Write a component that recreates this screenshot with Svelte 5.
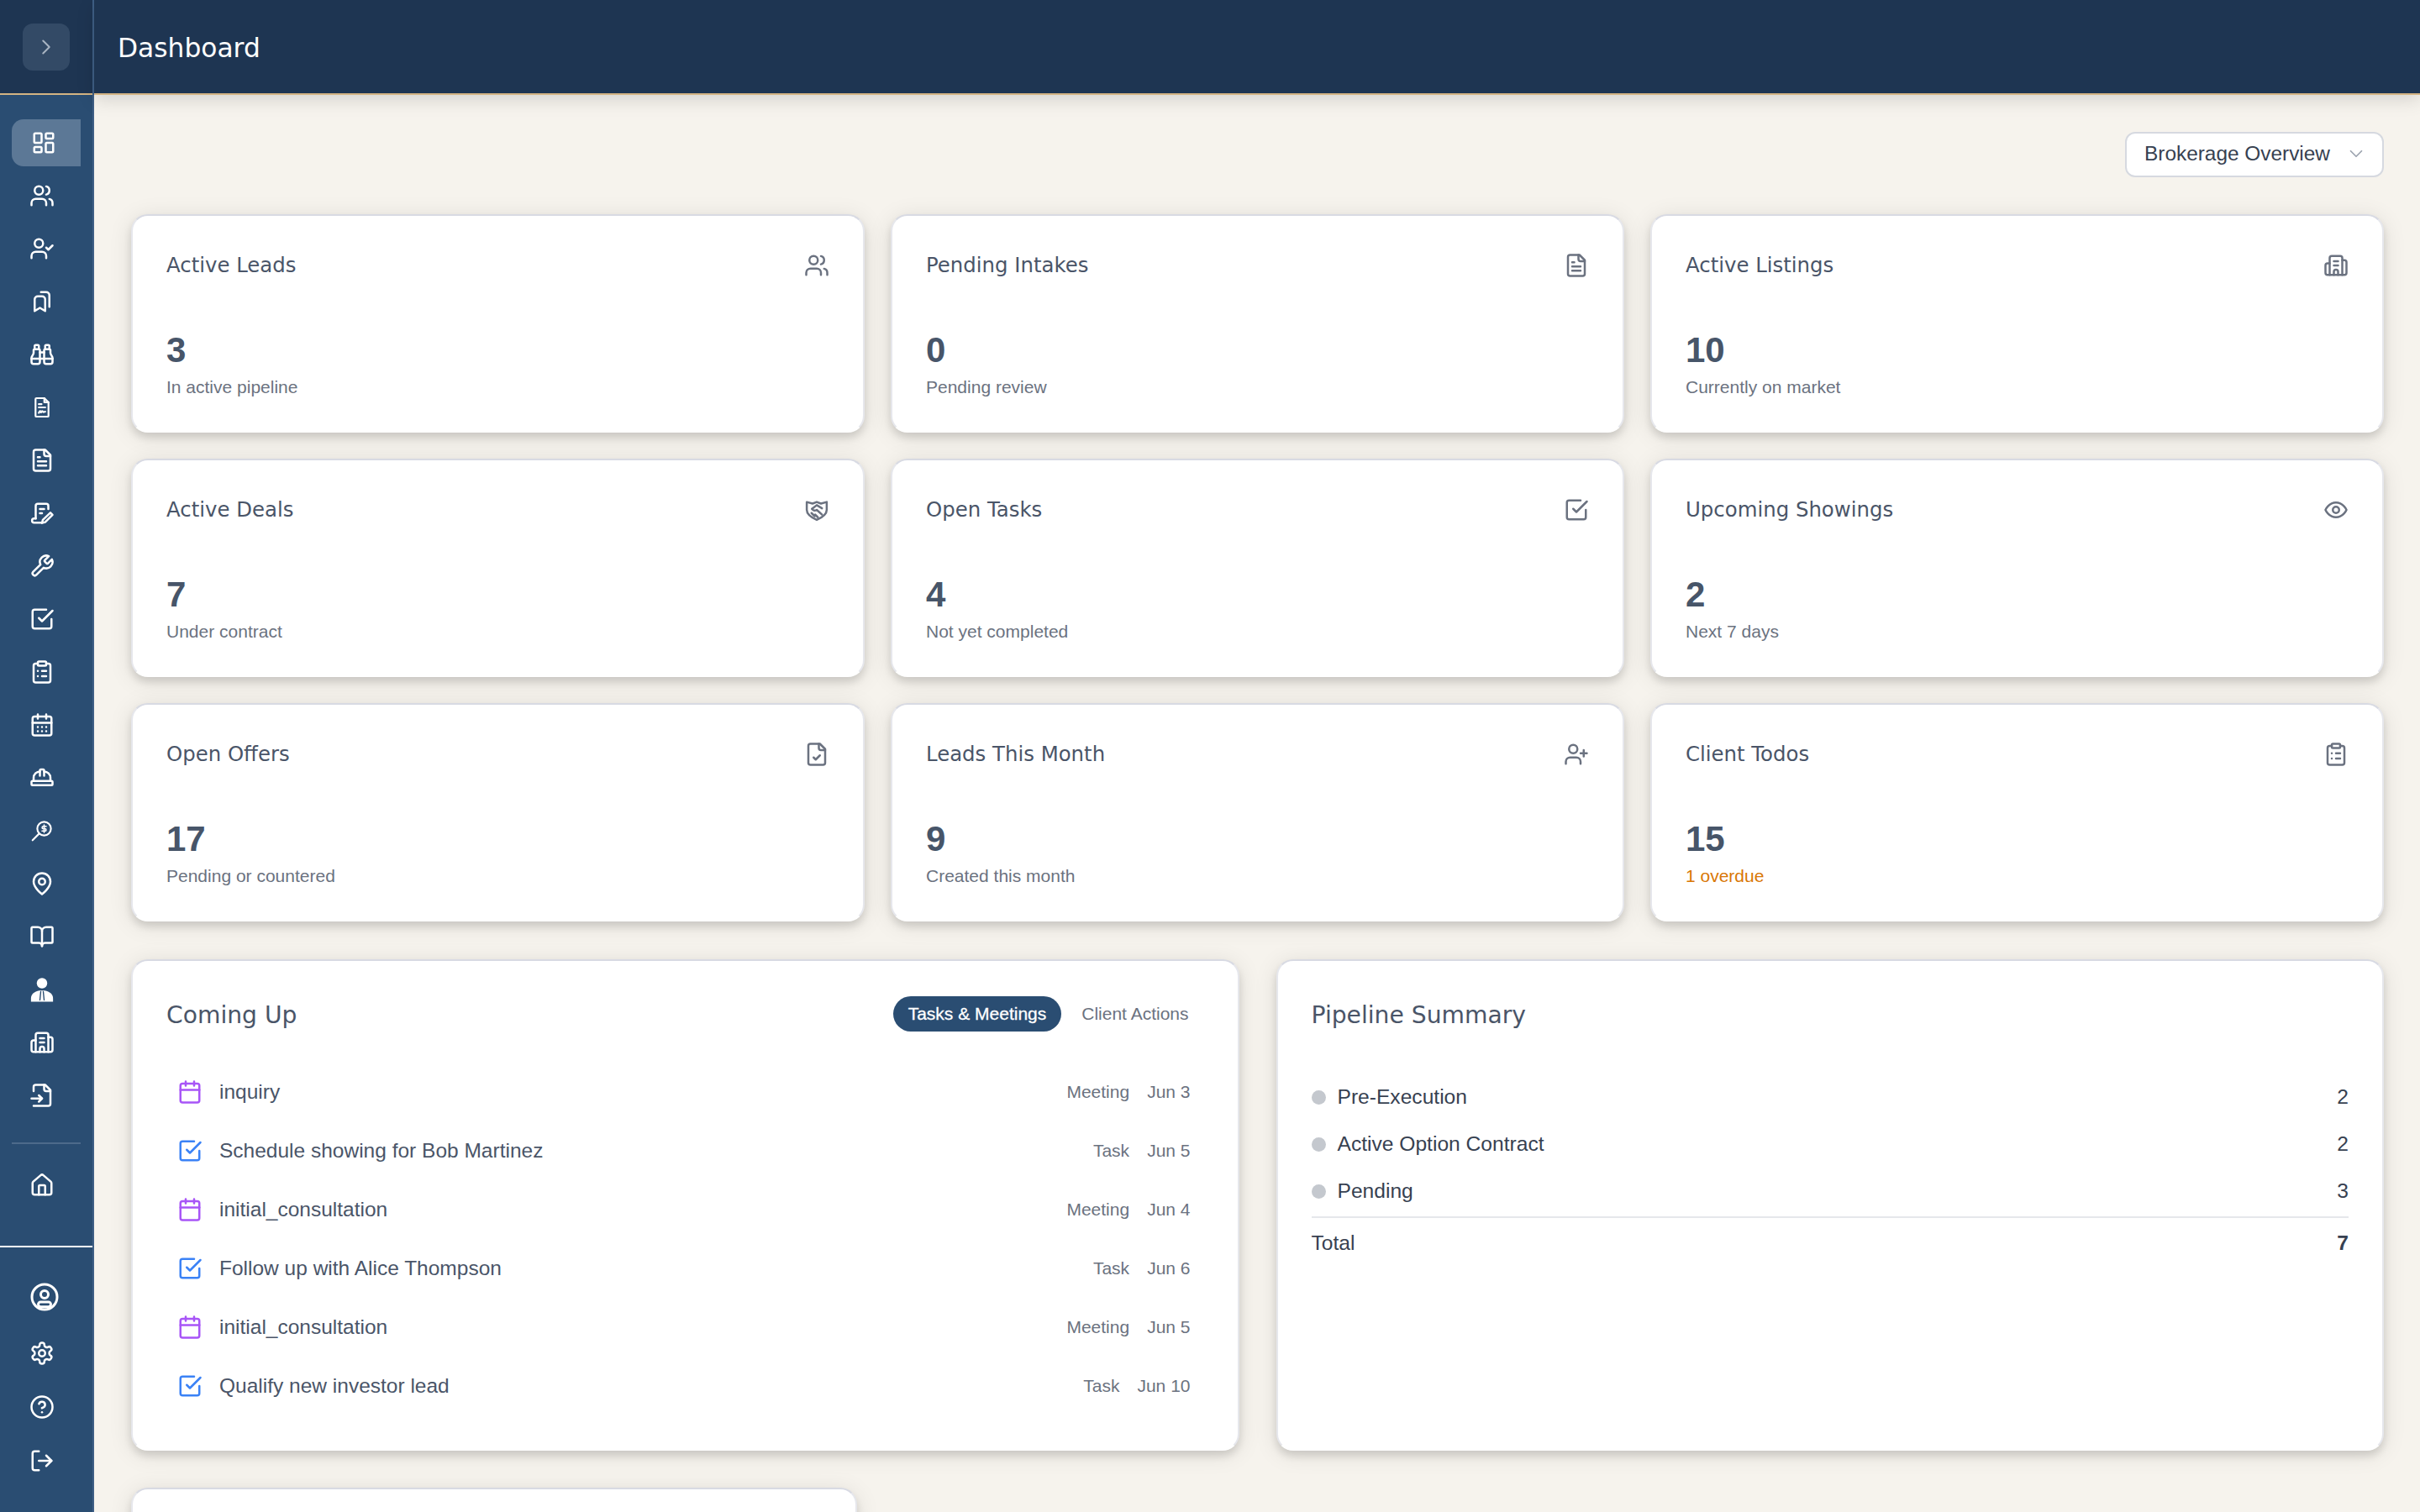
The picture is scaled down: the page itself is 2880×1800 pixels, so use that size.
<script lang="ts">
	const icons: Record<string, string> = {
		dashboard: '<rect x="3" y="3" width="7" height="9" rx="1"/><rect x="14" y="3" width="7" height="5" rx="1"/><rect x="14" y="12" width="7" height="9" rx="1"/><rect x="3" y="16" width="7" height="5" rx="1"/>',
		users: '<path d="M16 21v-2a4 4 0 0 0-4-4H6a4 4 0 0 0-4 4v2"/><circle cx="9" cy="7" r="4"/><path d="M22 21v-2a4 4 0 0 0-3-3.87"/><path d="M16 3.13a4 4 0 0 1 0 7.75"/>',
		userCheck: '<path d="M16 21v-2a4 4 0 0 0-4-4H6a4 4 0 0 0-4 4v2"/><circle cx="9" cy="7" r="4"/><path d="m16 11 2 2 4-4"/>',
		userPlus: '<path d="M16 21v-2a4 4 0 0 0-4-4H6a4 4 0 0 0-4 4v2"/><circle cx="9" cy="7" r="4"/><path d="M19 8v6M22 11h-6"/>',
		bookmarks: '<path d="M15 10v11l-5-3-5 3V10a3 3 0 0 1 3-3h4a3 3 0 0 1 3 3z"/><path d="M11 3h5a3 3 0 0 1 3 3v11"/>',
		binoculars: '<path d="M10 10h4"/><path d="M19 7V4a1 1 0 0 0-1-1h-2a1 1 0 0 0-1 1v3"/><path d="M20 21a2 2 0 0 0 2-2v-3.851c0-1.39-2-2.962-2-4.829V8a1 1 0 0 0-1-1h-4a1 1 0 0 0-1 1v11a2 2 0 0 0 2 2z"/><path d="M22 16H2"/><path d="M4 21a2 2 0 0 1-2-2v-3.851c0-1.39 2-2.962 2-4.829V8a1 1 0 0 1 1-1h4a1 1 0 0 1 1 1v11a2 2 0 0 1-2 2z"/><path d="M9 7V4a1 1 0 0 0-1-1H6a1 1 0 0 0-1 1v3"/>',
		fileSign: '<g transform="translate(12 12) scale(.88) translate(-12 -12)"><path d="M14.5 2H6a1 1 0 0 0-1 1v18a1 1 0 0 0 1 1h12a1 1 0 0 0 1-1V6.5z"/><path d="M14.5 2v4.5H19"/><path d="M8.5 8.5h3M8.5 12h7"/><path d="M8.5 18c1-2.5 2-2.5 2.2-1s1-1.5 1.8-.8.7 1 1.2.8 1 0 1.8-.4"/></g>',
		fileText: '<path d="M15 2H6a2 2 0 0 0-2 2v16a2 2 0 0 0 2 2h12a2 2 0 0 0 2-2V7Z"/><path d="M14 2v4a2 2 0 0 0 2 2h4"/><path d="M10 9H8M16 13H8M16 17H8"/>',
		contract: '<path d="M18 8V5a2 2 0 0 0-2-2H8a2 2 0 0 0-2 2v12"/><path d="M6 17H4.5a2 2 0 0 0 0 4H12"/><path d="M10 8h4M10 12h2"/><path d="M20 11.5l2 2-7 7-3 .8.8-3z"/>',
		wrench: '<path d="M14.7 6.3a1 1 0 0 0 0 1.4l1.6 1.6a1 1 0 0 0 1.4 0l3.77-3.77a6 6 0 0 1-7.94 7.94l-6.91 6.91a2.12 2.12 0 0 1-3-3l6.91-6.91a6 6 0 0 1 7.94-7.94l-3.76 3.76z"/>',
		check: '<path d="m9 11 3 3L22 4"/><path d="M21 12v7a2 2 0 0 1-2 2H5a2 2 0 0 1-2-2V5a2 2 0 0 1 2-2h11"/>',
		clipboard: '<rect x="8" y="2" width="8" height="4" rx="1"/><path d="M16 4h2a2 2 0 0 1 2 2v14a2 2 0 0 1-2 2H6a2 2 0 0 1-2-2V6a2 2 0 0 1 2-2h2"/><path d="M12 11h4M12 16h4M8 11h.01M8 16h.01"/>',
		calendarDays: '<path d="M8 2v4M16 2v4"/><rect x="3" y="4" width="18" height="18" rx="2"/><path d="M3 10h18"/><path d="M8 14h.01M12 14h.01M16 14h.01M8 18h.01M12 18h.01M16 18h.01"/>',
		calendar: '<path d="M8 2v4M16 2v4"/><rect x="3" y="4" width="18" height="18" rx="2"/><path d="M3 10h18"/>',
		hardHat: '<path d="M10 10V5a1 1 0 0 1 1-1h2a1 1 0 0 1 1 1v5"/><path d="M14 6a6 6 0 0 1 6 6v3"/><path d="M4 15v-3a6 6 0 0 1 6-6"/><rect x="2" y="15" width="20" height="4" rx="1"/>',
		searchDollar: '<circle cx="14" cy="10" r="6.5" stroke-width="1.7"/><path d="M9.3 14.7 3 21" stroke-width="1.7"/><path d="M16 7.8h-2.8a1.1 1.1 0 0 0 0 2.2h1.6a1.1 1.1 0 0 1 0 2.2H12M14 6.5v7" stroke-width="1.3"/>',
		pin: '<path d="M20 10c0 6-8 12-8 12s-8-6-8-12a8 8 0 0 1 16 0Z"/><circle cx="12" cy="10" r="3"/>',
		book: '<path d="M12 7v14"/><path d="M3 18a1 1 0 0 1-1-1V4a1 1 0 0 1 1-1h5a4 4 0 0 1 4 4 4 4 0 0 1 4-4h5a1 1 0 0 1 1 1v13a1 1 0 0 1-1 1h-6a3 3 0 0 0-3 3 3 3 0 0 0-3-3z"/>',
		userTie: '<circle cx="12" cy="6" r="5" fill="currentColor" stroke="none"/><path d="M1.500 23.500v-3c0-4 3-6.500 8-7.500h5c5 1 8 3.500 8 7.500v3z" fill="currentColor" stroke="none"/><path d="M10.800 14l-.8 8M13.200 14l.8 8" stroke="#2a4d72" stroke-width="1.100"/>',
		building: '<path d="M10 12h4M10 8h4"/><path d="M14 21v-3a2 2 0 0 0-4 0v3"/><path d="M6 10H4a2 2 0 0 0-2 2v7a2 2 0 0 0 2 2h16a2 2 0 0 0 2-2V9a2 2 0 0 0-2-2h-2"/><path d="M6 21V5a2 2 0 0 1 2-2h8a2 2 0 0 1 2 2v16"/>',
		fileInput: '<path d="M4 22h14a2 2 0 0 0 2-2V7l-5-5H6a2 2 0 0 0-2 2v4"/><path d="M14 2v4a2 2 0 0 0 2 2h4"/><path d="M2 15h10"/><path d="m9 18 3-3-3-3"/>',
		home: '<path d="M15 21v-8a1 1 0 0 0-1-1h-4a1 1 0 0 0-1 1v8"/><path d="M3 10a2 2 0 0 1 .709-1.528l7-6a2 2 0 0 1 2.582 0l7 6A2 2 0 0 1 21 10v9a2 2 0 0 1-2 2H5a2 2 0 0 1-2-2z"/>',
		userCircle: '<circle cx="12" cy="12" r="10"/><circle cx="12" cy="10" r="3"/><rect x="7" y="16" width="10" height="3.8" rx="1.9"/>',
		settings: '<path d="M12.22 2h-.44a2 2 0 0 0-2 2v.18a2 2 0 0 1-1 1.73l-.43.25a2 2 0 0 1-2 0l-.15-.08a2 2 0 0 0-2.73.73l-.22.38a2 2 0 0 0 .73 2.73l.15.1a2 2 0 0 1 1 1.72v.51a2 2 0 0 1-1 1.74l-.15.09a2 2 0 0 0-.73 2.73l.22.38a2 2 0 0 0 2.73.73l.15-.08a2 2 0 0 1 2 0l.43.25a2 2 0 0 1 1 1.73V20a2 2 0 0 0 2 2h.44a2 2 0 0 0 2-2v-.18a2 2 0 0 1 1-1.73l.43-.25a2 2 0 0 1 2 0l.15.08a2 2 0 0 0 2.73-.73l.22-.39a2 2 0 0 0-.73-2.73l-.15-.08a2 2 0 0 1-1-1.74v-.5a2 2 0 0 1 1-1.74l.15-.09a2 2 0 0 0 .73-2.73l-.22-.38a2 2 0 0 0-2.73-.73l-.15.08a2 2 0 0 1-2 0l-.43-.25a2 2 0 0 1-1-1.73V4a2 2 0 0 0-2-2z"/><circle cx="12" cy="12" r="3"/>',
		help: '<circle cx="12" cy="12" r="10"/><path d="M9.09 9a3 3 0 0 1 5.83 1c0 2-3 3-3 3"/><path d="M12 17h.01"/>',
		logout: '<path d="M9 21H5a2 2 0 0 1-2-2V5a2 2 0 0 1 2-2h4"/><path d="m16 17 5-5-5-5"/><path d="M21 12H9"/>',
		handshake: '<path d="M2.5 4.5 8 6l4-1.5L16 6l5.5-1.5V12c0 4-5 7.5-9.5 9.5-4.5-2-9.5-5.5-9.5-9.5z"/><path d="M7.5 11 12 7.5l5 3"/><path d="M7.5 11c1 2 3 2 4.5 1l5 4.5"/><path d="M10 18l-3-3M13 19l-2.5-2.5"/>',
		fileCheck: '<path d="M15 2H6a2 2 0 0 0-2 2v16a2 2 0 0 0 2 2h12a2 2 0 0 0 2-2V7Z"/><path d="M14 2v4a2 2 0 0 0 2 2h4"/><path d="m9 15 2 2 4-4"/>',
		eye: '<path d="M2 12s3-7 10-7 10 7 10 7-3 7-10 7-10-7-10-7Z"/><circle cx="12" cy="12" r="3"/>',
		chevronRight: '<path d="m9 18 6-6-6-6"/>',
		chevronDown: '<path d="m6 9 6 6 6-6"/>'
	};

	const nav = ['users', 'userCheck', 'bookmarks', 'binoculars', 'fileSign', 'fileText', 'contract', 'wrench', 'check', 'clipboard', 'calendarDays', 'hardHat', 'searchDollar', 'pin', 'book', 'userTie', 'building', 'fileInput'];
	const footerNav = ['settings', 'help', 'logout'];

	const stats = [
		{ title: 'Active Leads', icon: 'users', value: 3, sub: 'In active pipeline' },
		{ title: 'Pending Intakes', icon: 'fileText', value: 0, sub: 'Pending review' },
		{ title: 'Active Listings', icon: 'building', value: 10, sub: 'Currently on market' },
		{ title: 'Active Deals', icon: 'handshake', value: 7, sub: 'Under contract' },
		{ title: 'Open Tasks', icon: 'check', value: 4, sub: 'Not yet completed' },
		{ title: 'Upcoming Showings', icon: 'eye', value: 2, sub: 'Next 7 days' },
		{ title: 'Open Offers', icon: 'fileCheck', value: 17, sub: 'Pending or countered' },
		{ title: 'Leads This Month', icon: 'userPlus', value: 9, sub: 'Created this month' },
		{ title: 'Client Todos', icon: 'clipboard', value: 15, sub: '1 overdue', warn: true }
	];

	const upcoming = [
		{ name: 'inquiry', type: 'Meeting', date: 'Jun 3' },
		{ name: 'Schedule showing for Bob Martinez', type: 'Task', date: 'Jun 5' },
		{ name: 'initial_consultation', type: 'Meeting', date: 'Jun 4' },
		{ name: 'Follow up with Alice Thompson', type: 'Task', date: 'Jun 6' },
		{ name: 'initial_consultation', type: 'Meeting', date: 'Jun 5' },
		{ name: 'Qualify new investor lead', type: 'Task', date: 'Jun 10' }
	];

	const pipeline = [
		{ stage: 'Pre-Execution', count: 2 },
		{ stage: 'Active Option Contract', count: 2 },
		{ stage: 'Pending', count: 3 }
	];
</script>

{#snippet icon(name: string, cls = '')}
	<svg class={cls} viewBox="0 0 24 24" fill="none" stroke="currentColor" stroke-width="2" stroke-linecap="round" stroke-linejoin="round">
		{@html icons[name]}
	</svg>
{/snippet}

<div class="shell">
	<aside class="sidebar">
		<div class="brand">
			<button class="collapse">{@render icon('chevronRight', 'chev')}</button>
		</div>
		<nav class="nav">
			<div class="nav-item active">{@render icon('dashboard', 'nav-icon')}</div>
			{#each nav as name}
				<div class="nav-item">{@render icon(name, 'nav-icon')}</div>
			{/each}
			<div class="divider"></div>
			<div class="nav-item">{@render icon('home', 'nav-icon')}</div>
		</nav>
		<div class="side-footer">
			<div class="nav-item user">{@render icon('userCircle', 'user-icon')}</div>
			{#each footerNav as name}
				<div class="nav-item">{@render icon(name, 'nav-icon')}</div>
			{/each}
		</div>
	</aside>

	<div class="page">
		<header class="topbar"><h1>Dashboard</h1></header>
		<main class="content">
			<div class="toolbar">
				<div class="select">
					<span>Brokerage Overview</span>
					{@render icon('chevronDown', 'select-chev')}
				</div>
			</div>

			<section class="stats">
				{#each stats as s}
					<div class="card stat">
						<div class="stat-head">
							<span class="stat-title">{s.title}</span>
							{@render icon(s.icon, 'stat-icon')}
						</div>
						<div class="stat-value">{s.value}</div>
						<div class="stat-sub" class:warn={s.warn}>{s.sub}</div>
					</div>
				{/each}
			</section>

			<section class="panels">
				<div class="card panel">
					<div class="panel-head">
						<h2>Coming Up</h2>
						<div class="tabs">
							<span class="tab on">Tasks &amp; Meetings</span>
							<span class="tab">Client Actions</span>
						</div>
					</div>
					<ul class="list">
						{#each upcoming as item}
							<li class="row">
								{#if item.type === 'Meeting'}
									{@render icon('calendar', 'row-icon meeting')}
								{:else}
									{@render icon('check', 'row-icon task')}
								{/if}
								<span class="row-name">{item.name}</span>
								<span class="row-type">{item.type}</span>
								<span class="row-date">{item.date}</span>
							</li>
						{/each}
					</ul>
				</div>

				<div class="card panel">
					<div class="panel-head"><h2>Pipeline Summary</h2></div>
					<div class="summary">
						{#each pipeline as p}
							<div class="sum-row">
								<span class="dot"></span>
								<span class="sum-name">{p.stage}</span>
								<span>{p.count}</span>
							</div>
						{/each}
						<div class="sum-total">
							<span>Total</span>
							<strong>7</strong>
						</div>
					</div>
				</div>
			</section>

			<section class="more">
				<div class="card extra"></div>
			</section>
		</main>
	</div>
</div>

<style>
	:global(body) {
		background: #f6f3ed;
		font-family: 'Liberation Sans', Arial, sans-serif;
	}

	.shell {
		display: flex;
		height: 100vh;
		overflow: hidden;
	}

	.sidebar {
		width: 110px;
		flex: none;
		display: flex;
		flex-direction: column;
		background: #2a4d72;
		border-right: 2px solid #3f5f85;
		color: #fff;
	}

	.brand {
		height: 111px;
		flex: none;
		display: flex;
		align-items: center;
		justify-content: center;
		background: #1e3552;
		border-bottom: 2px solid #d4b483;
		box-sizing: content-box;
	}

	.collapse {
		width: 56px;
		height: 56px;
		display: flex;
		align-items: center;
		justify-content: center;
		padding: 0;
		border: none;
		border-radius: 12px;
		background: #334a66;
		color: #a8b4c2;
	}

	.collapse :global(.chev) {
		width: 30px;
		height: 30px;
		stroke-width: 1.6;
	}

	.nav {
		flex: 1;
		display: flex;
		flex-direction: column;
		gap: 7px;
		padding-top: 29px;
	}

	.nav-item {
		height: 56px;
		flex: none;
		display: flex;
		align-items: center;
		padding-left: 35px;
	}

	.nav-item.active {
		width: 82px;
		margin-left: 14px;
		padding-left: 23px;
		box-sizing: border-box;
		background: #5c7896;
		border-radius: 14px 0 0 14px;
	}

	.nav-item :global(.nav-icon) {
		width: 30px;
		height: 30px;
	}

	.divider {
		height: 2px;
		flex: none;
		margin: 21px 14px 14px;
		background: #4d6a8b;
	}

	.side-footer {
		display: flex;
		flex-direction: column;
		gap: 8px;
		padding: 28px 0 33px;
		border-top: 2px solid #fff;
	}

	.side-footer .user {
		padding-left: 35px;
		height: 62px;
	}

	.side-footer .user :global(.user-icon) {
		width: 36px;
		height: 36px;
	}

	.page {
		flex: 1;
		min-width: 0;
		display: flex;
		flex-direction: column;
	}

	.topbar {
		height: 109px;
		flex: none;
		display: flex;
		align-items: center;
		padding: 2px 0 0 28px;
		background: #1e3552;
		border-bottom: 2px solid #d4b483;
		box-shadow: 0 6px 20px rgba(0, 0, 0, 0.13);
		z-index: 1;
	}

	h1 {
		margin: 0;
		font: 500 31.3px 'DejaVu Sans', sans-serif;
		color: #fff;
	}

	.content {
		flex: 1;
		min-height: 0;
		padding: 44px 43px 0 44px;
		display: flex;
		flex-direction: column;
		gap: 44px;
		overflow: hidden;
	}

	.toolbar {
		display: flex;
		justify-content: flex-end;
		flex: none;
	}

	.select {
		width: 308px;
		height: 54px;
		box-sizing: border-box;
		display: flex;
		align-items: center;
		justify-content: space-between;
		padding: 0 18px 2px 21px;
		background: #fff;
		border: 2px solid #d6d9e0;
		border-radius: 12px;
		font-size: 24.4px;
		color: #374151;
	}

	.select :global(.select-chev) {
		width: 26px;
		height: 26px;
		color: #9ca3af;
		stroke-width: 1.6;
	}

	.stats {
		flex: none;
		display: grid;
		grid-template-columns: repeat(3, 1fr);
		gap: 31px;
		margin-bottom: 1px;
	}

	.card {
		box-sizing: border-box;
		background: #fff;
		border: 2px solid #e6e7ec;
		border-top-color: #d8dae3;
		border-bottom-color: #fff;
		border-radius: 20px;
		box-shadow: 0 6px 10px rgba(0, 0, 0, 0.12), 0 4px 28px rgba(0, 0, 0, 0.1);
	}

	.stat {
		padding: 40px 40px 38px;
	}

	.stat-head {
		display: flex;
		align-items: center;
		justify-content: space-between;
		height: 36px;
	}

	.stat-title {
		font: 24.4px 'DejaVu Sans', sans-serif;
		color: #4a5568;
	}

	.stat-head :global(.stat-icon) {
		width: 30px;
		height: 30px;
		color: #6b7280;
		margin-top: 2px;
	}

	.stat-value {
		margin-top: 62px;
		font-size: 42px;
		line-height: 44px;
		font-weight: 700;
		color: #475569;
	}

	.stat-sub {
		margin-top: 8px;
		font-size: 21px;
		line-height: 28px;
		color: #6b7280;
	}

	.stat-sub.warn {
		color: #d97706;
	}

	.panels {
		flex: none;
		display: grid;
		grid-template-columns: repeat(2, 1fr);
		gap: 44px;
	}

	.panel {
		padding: 40px;
		min-height: 580px;
	}

	.panel-head {
		height: 42px;
		display: flex;
		align-items: center;
		justify-content: space-between;
	}

	h2 {
		margin: 6px 0 0;
		font: 400 28.2px 'DejaVu Sans', sans-serif;
		color: #4a5568;
	}

	.tabs {
		display: flex;
		gap: 6px;
		margin-top: 3px;
		font-size: 21px;
	}

	.tab {
		height: 42px;
		display: flex;
		align-items: center;
		padding: 0 18px;
		color: #6b7280;
		white-space: nowrap;
	}

	.tab.on {
		background: #2a4d72;
		border-radius: 21px;
		color: #fff;
		-webkit-text-stroke: 0.3px #fff;
	}

	.list {
		list-style: none;
		margin: 39px 0 0;
		padding: 0;
	}

	.row {
		height: 70px;
		display: flex;
		align-items: center;
		padding: 0 16px;
		font-size: 21px;
		color: #6b7280;
	}

	.row :global(.row-icon) {
		width: 30px;
		height: 30px;
		margin-left: -3px;
		flex: none;
	}

	.row :global(.meeting) {
		color: #a855f7;
	}

	.row :global(.task) {
		color: #3b82f6;
	}

	.row-name {
		flex: 1;
		margin-left: 20px;
		font-size: 24.5px;
		color: #4a5568;
	}

	.row-date {
		margin-left: 21px;
	}

	.summary {
		margin-top: 52px;
		font-size: 24.6px;
		color: #374151;
	}

	.sum-row {
		height: 56px;
		display: flex;
		align-items: center;
	}

	.dot {
		width: 17px;
		height: 17px;
		border-radius: 50%;
		background: #c4c8ce;
		margin-right: 14px;
	}

	.sum-name {
		flex: 1;
	}

	.sum-total {
		display: flex;
		justify-content: space-between;
		margin-top: 2px;
		padding-top: 14px;
		border-top: 2px solid #e5e7eb;
		line-height: 32px;
	}

	.more {
		flex: none;
		display: grid;
		grid-template-columns: repeat(3, 1fr);
		gap: 44px;
	}

	.extra {
		height: 300px;
	}
</style>
